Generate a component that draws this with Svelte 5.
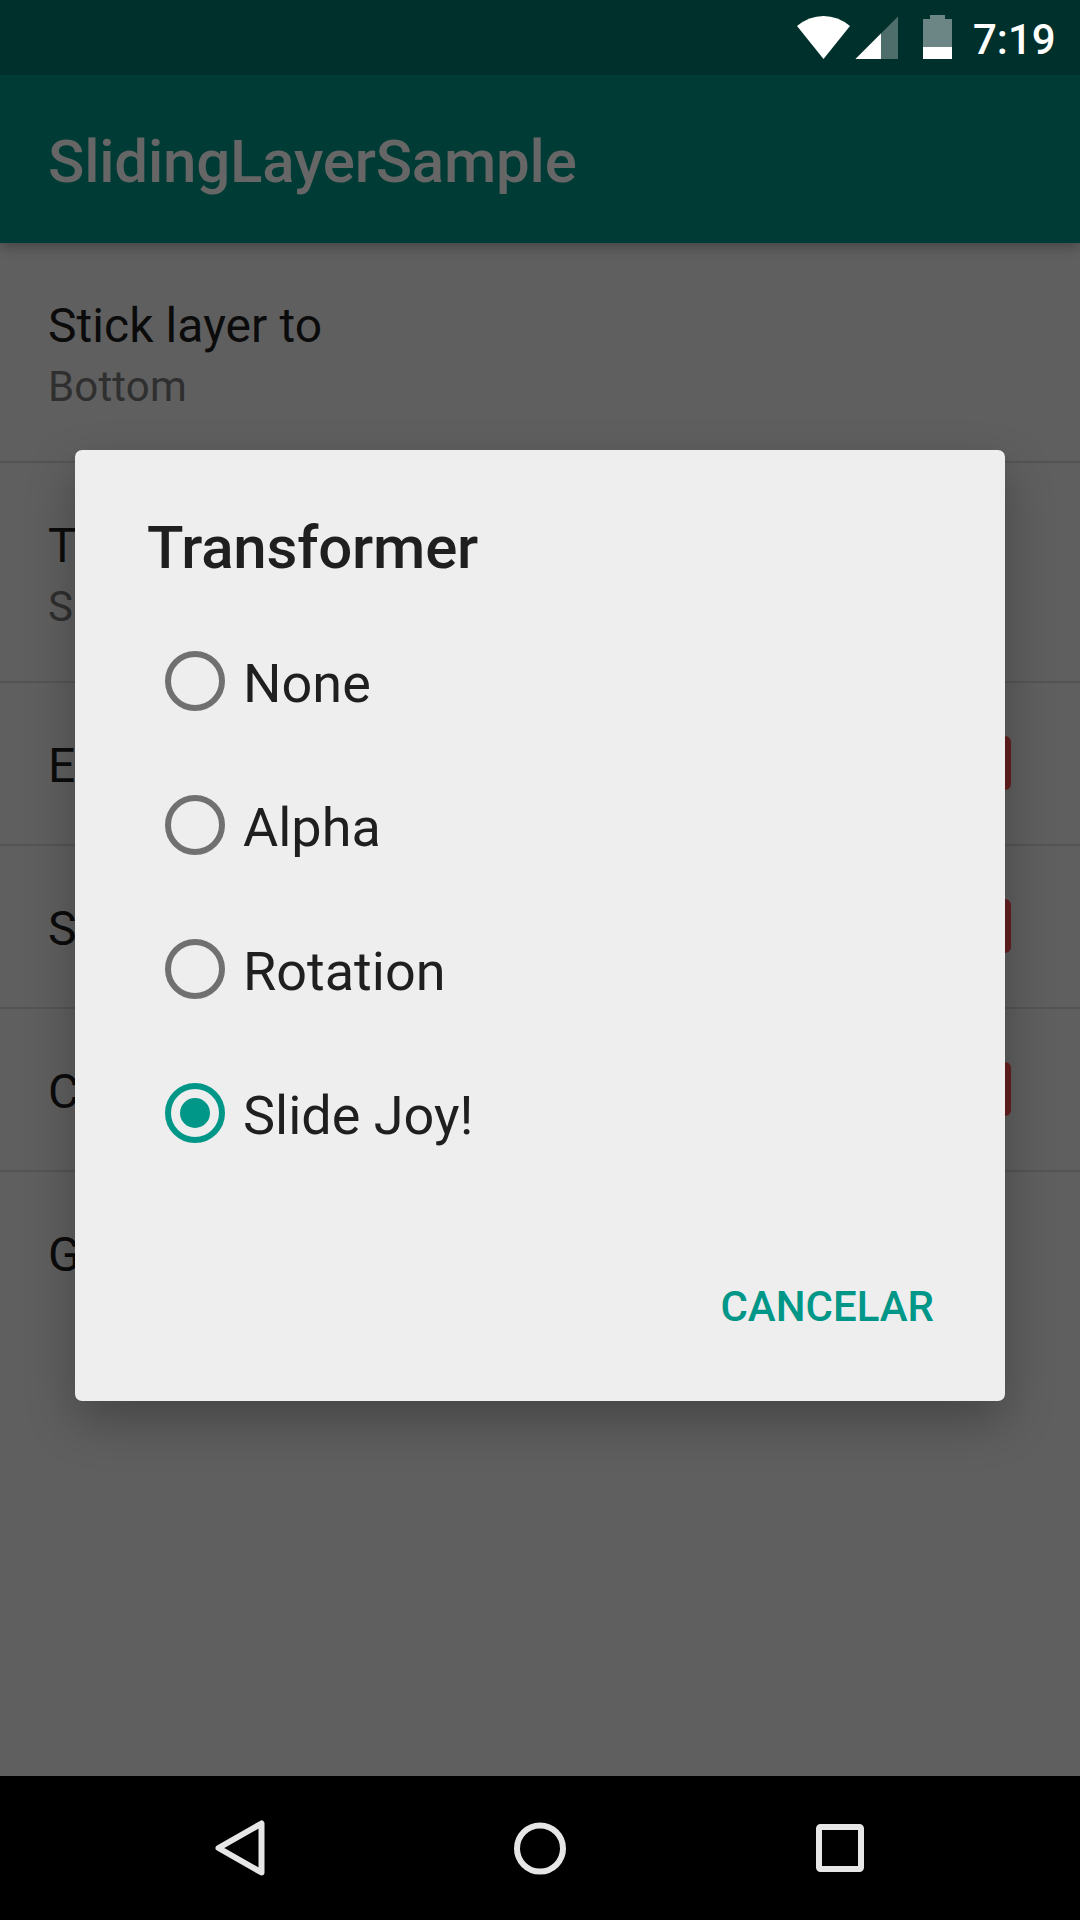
<script>
  const rows = [
    { title: 'Stick layer to', summary: 'Bottom' },
    { title: 'T', summary: 'S' },
    { title: 'E', toggle: true },
    { title: 'S', toggle: true },
    { title: 'C', toggle: true },
    { title: 'G' }
  ];
  const options = ['None', 'Alpha', 'Rotation', 'Slide Joy!'];
  let selected = $state('Slide Joy!');
</script>

<div class="screen">
  <header class="status">
    <svg class="icons" width="160" height="75" viewBox="795 0 160 75">
      <path d="M823.5 59 L797 26 Q809 16 823.5 16 Q838 16 850 26 Z" fill="#fff" />
      <path d="M855.5 59 L898 16.5 V59 Z" fill="#fff" fill-opacity="0.3" />
      <path d="M855.5 59 L881 33.5 V59 Z" fill="#fff" />
      <path d="M923 19 H930 V15 H945 V19 H952 V47 H923 Z" fill="#fff" fill-opacity="0.42" />
      <path d="M923 47 H952 V59 H923 Z" fill="#fff" />
    </svg>
    <span class="clock">7:19</span>
  </header>

  <div class="appbar"><h1>SlidingLayerSample</h1></div>

  <main class="list">
    {#each rows as row}
      <div class="row" class:tall={row.summary}>
        <div class="texts">
          <div class="title">{row.title}</div>
          {#if row.summary}<div class="summary">{row.summary}</div>{/if}
        </div>
        {#if row.toggle}<span class="toggle"></span>{/if}
      </div>
    {/each}
  </main>

  <nav class="navbar">
    <svg width="72" height="72" viewBox="0 0 72 72">
      <path d="M57.5 11.5 V60.5 L14.5 36 Z" />
    </svg>
    <svg width="72" height="72" viewBox="0 0 72 72">
      <circle cx="36" cy="36.5" r="23" />
    </svg>
    <svg width="72" height="72" viewBox="0 0 72 72">
      <rect x="15" y="15" width="42" height="42" rx="1.5" />
    </svg>
  </nav>

  <div class="dialog">
    <h2>Transformer</h2>
    <div class="options">
      {#each options as option}
        <button class="option" onclick={() => (selected = option)}>
          <span class="radio" class:checked={selected === option}></span>
          <span class="label">{option}</span>
        </button>
      {/each}
    </div>
    <button class="cancel">CANCELAR</button>
  </div>
</div>

<style>
  :global(body) {
    margin: 0;
    background: #5f5f5f;
  }
  .screen {
    position: relative;
    display: flex;
    flex-direction: column;
    width: 1080px;
    height: 1920px;
    overflow: hidden;
    background: #5f5f5f;
    font-family: Roboto, sans-serif;
  }
  h1,
  h2 {
    margin: 0;
    font-weight: 500;
    font-size: 60px;
    line-height: 70px;
    letter-spacing: -0.2px;
  }
  button {
    border: 0;
    padding: 0;
    background: none;
    font-family: inherit;
    text-align: left;
  }
  .status {
    position: relative;
    z-index: 2;
    display: flex;
    justify-content: flex-end;
    box-sizing: border-box;
    height: 75px;
    padding-right: 24px;
    background: #00302b;
  }
  .icons {
    display: block;
    margin-right: 18px;
  }
  .clock {
    width: 83px;
    padding-top: 15px;
    font-size: 42px;
    font-weight: 500;
    line-height: 50px;
    white-space: nowrap;
    color: #fff;
  }
  .appbar {
    flex: none;
    box-sizing: border-box;
    height: 168px;
    padding: 52px 48px 0;
    background: #003c35;
    color: #666;
    box-shadow: 0 3px 12px rgba(0, 0, 0, 0.3);
    z-index: 1;
  }
  .list {
    flex: 1;
  }
  .row {
    display: flex;
    justify-content: space-between;
    box-sizing: border-box;
    height: 163px;
    padding: 55px 69px 0 48px;
    border-bottom: 2px solid #545454;
  }
  .row.tall {
    height: 220px;
  }
  .row:last-child {
    border-bottom: 0;
  }
  .title {
    font-size: 48px;
    line-height: 56px;
    letter-spacing: 0.06px;
    color: #0b0b0b;
  }
  .summary {
    margin-top: 8px;
    font-size: 42px;
    line-height: 50px;
    letter-spacing: 0.15px;
    color: #2f2f2f;
  }
  .toggle {
    width: 140px;
    height: 54px;
    margin-top: -2px;
    border-radius: 6px;
    background: #661f1f;
  }
  .navbar {
    display: flex;
    justify-content: center;
    align-items: center;
    gap: 228px;
    height: 144px;
    background: #000;
  }
  .navbar svg {
    fill: none;
    stroke: #e6e6e6;
    stroke-width: 6;
    stroke-linejoin: round;
  }
  .dialog {
    position: absolute;
    left: 75px;
    top: 450px;
    z-index: 2;
    display: flex;
    flex-direction: column;
    box-sizing: border-box;
    width: 930px;
    height: 951px;
    padding: 63px 71px 0 72px;
    border-radius: 7px;
    background: #eee;
    color: #1f1f1f;
    box-shadow: 0 20px 48px rgba(0, 0, 0, 0.27);
  }
  .options {
    display: flex;
    flex-direction: column;
    padding: 26px 0 0 18px;
  }
  .option {
    display: flex;
    align-items: center;
    height: 144px;
    color: #1f1f1f;
  }
  .radio {
    display: grid;
    place-items: center;
    box-sizing: border-box;
    width: 60px;
    height: 60px;
    border: 6px solid #707070;
    border-radius: 50%;
  }
  .radio.checked {
    border-color: #009688;
  }
  .radio.checked::after {
    content: '';
    width: 30px;
    height: 30px;
    border-radius: 50%;
    background: #009688;
  }
  .label {
    margin-left: 18px;
    padding-top: 5px;
    font-size: 54px;
    line-height: 64px;
  }
  .cancel {
    align-self: flex-end;
    margin-top: 97px;
    font-size: 42px;
    font-weight: 500;
    line-height: 50px;
    color: #009688;
  }
</style>
